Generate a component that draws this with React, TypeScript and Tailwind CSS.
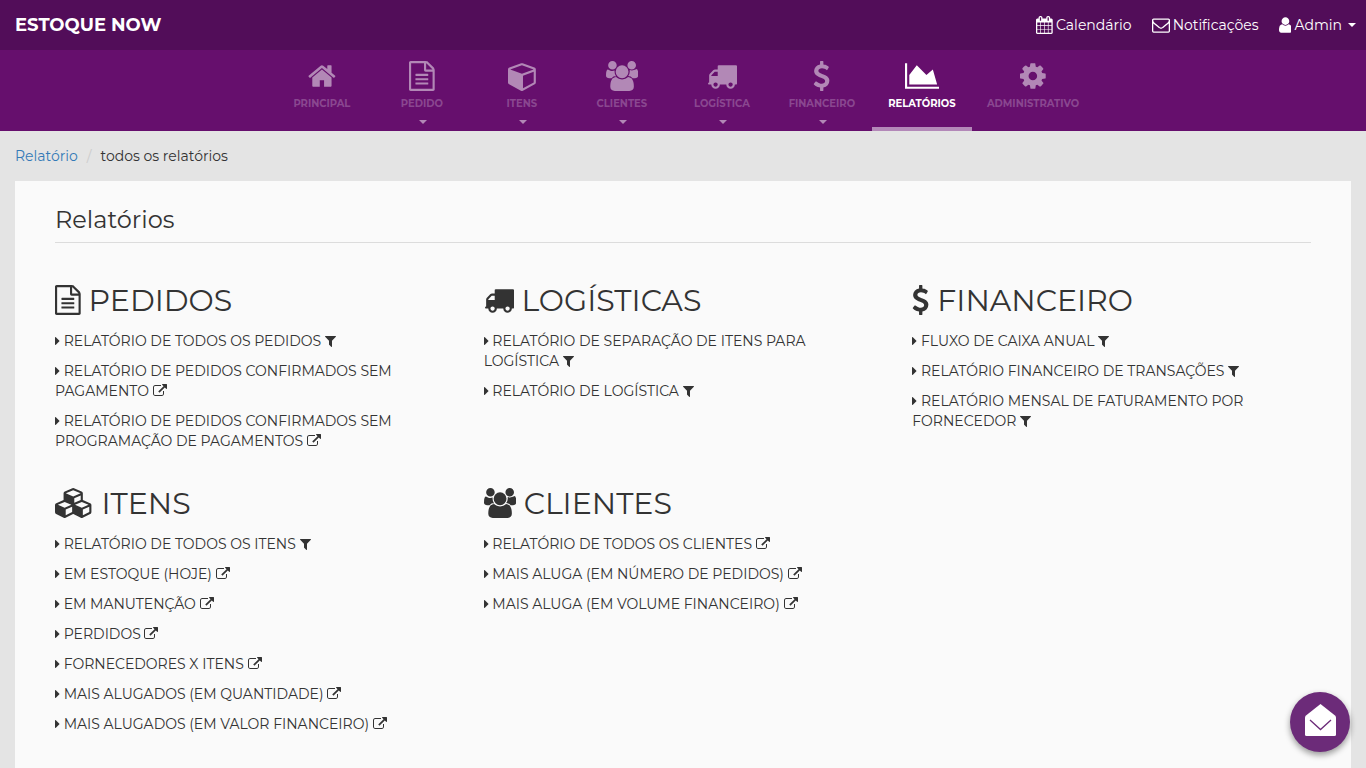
type IconName =
  | "home"
  | "file"
  | "cube"
  | "cubes"
  | "users"
  | "truck"
  | "dollar"
  | "chart"
  | "cog"
  | "calendar"
  | "envelope"
  | "user"
  | "filter"
  | "external"
  | "caret";

const icons: Record<IconName, { box: string; d: string }> = {
  home: {
    box: "64 0 1664 1792",
    d: "M1472 992v480q0 26-19 45t-45 19h-384v-384h-256v384h-384q-26 0-45-19t-19-45v-480q0-1 .5-3t.5-3l575-474 575 474q1 2 1 6zm223-69l-62 74q-8 9-21 11h-3q-13 0-21-7l-692-577-692 577q-12 8-24 7-13-2-21-11l-62-74q-8-10-7-23.5t11-21.5l719-599q32-26 76-26t76 26l244 204v-195q0-14 9-23t23-9h192q14 0 23 9t9 23v408l219 182q10 8 11 21.5t-7 23.5z",
  },
  file: {
    box: "128 0 1536 1792",
    d: "M1596 380q28 28 48 76t20 88v1152q0 40-28 68t-68 28h-1344q-40 0-68-28t-28-68v-1600q0-40 28-68t68-28h896q40 0 88 20t76 48zm-444-244v376h376q-10-29-22-41l-313-313q-12-12-41-22zm384 1528v-1024h-416q-40 0-68-28t-28-68v-416h-768v1536h1280zm-1024-864q0-14 9-23t23-9h704q14 0 23 9t9 23v64q0 14-9 23t-23 9h-704q-14 0-23-9t-9-23v-64zm736 224q14 0 23 9t9 23v64q0 14-9 23t-23 9h-704q-14 0-23-9t-9-23v-64q0-14 9-23t23-9h704zm0 256q14 0 23 9t9 23v64q0 14-9 23t-23 9h-704q-14 0-23-9t-9-23v-64q0-14 9-23t23-9h704z",
  },
  cube: {
    box: "0 0 1664 1792",
    d: "M896 1629l640-349v-636l-640 233v752zm-64-865l698-254-698-254-698 254zm832-252v768q0 35-18 65t-49 47l-704 384q-28 16-61 16t-61-16l-704-384q-31-17-49-47t-18-65v-768q0-40 23-73t61-47l704-256q22-8 44-8t44 8l704 256q38 14 61 47t23 73z",
  },
  cubes: {
    box: "0 0 2304 1792",
    d: "M640 1632l384-192v-314l-384 164v342zm-64-454l404-173-404-173-404 173zm1088 454l384-192v-314l-384 164v342zm-64-454l404-173-404-173-404 173zm-448-293l384-165v-266l-384 164v267zm-64-379l441-189-441-189-441 189zm1088 518v416q0 36-19 67t-52 47l-448 224q-25 14-57 14t-57-14l-448-224q-4-2-7-4-2 2-7 4l-448 224q-25 14-57 14t-57-14l-448-224q-33-16-52-47t-19-67v-416q0-38 21.5-70t56.5-48l434-186v-400q0-38 21.5-70t56.5-48l448-192q23-10 50-10t50 10l448 192q35 16 56.5 48t21.5 70v400l434 186q36 16 57 48t21 70z",
  },
  users: {
    box: "0 0 1920 1792",
    d: "M593 896q-162 5-265 128h-134q-82 0-138-40.5t-56-118.5q0-353 124-353 6 0 43.5 21t97.5 42.5 119 21.5q67 0 133-23-5 37-5 66 0 159 93 287zm1071 637q0 120-73 189.5t-194 69.5h-874q-121 0-194-69.5t-73-189.5q0-53 3.5-103.5t14-109 26.5-108.5 43-97.5 62-81 85.5-53.5 111.5-20q10 0 43 21.5t73 48 107 48 135 21.5 135-21.5 107-48 73-48 43-21.5q61 0 111.5 20t85.5 53.5 62 81 43 97.5 26.5 108.5 14 109 3.5 103.5zm-1024-1277q0 106-75 181t-181 75-181-75-75-181 75-181 181-75 181 75 75 181zm704 384q0 159-112.5 271.5t-271.5 112.5-271.5-112.5-112.5-271.5 112.5-271.5 271.5-112.5 271.5 112.5 112.5 271.5zm576 225q0 78-56 118.5t-138 40.5h-134q-103-123-265-128 93-128 93-287 0-29-5-66 66 23 133 23 59 0 119-21.5t97.5-42.5 43.5-21q124 0 124 353zm-128-609q0 106-75 181t-181 75-181-75-75-181 75-181 181-75 181 75 75 181z",
  },
  truck: {
    box: "0 0 1792 1792",
    d: "M640 1408q0-52-38-90t-90-38-90 38-38 90 38 90 90 38 90-38 38-90zm-384-512h384v-256h-158q-13 0-22 9l-195 195q-9 9-9 22v30zm1280 512q0-52-38-90t-90-38-90 38-38 90 38 90 90 38 90-38 38-90zm256-1088v1024q0 15-4 26.5t-13.5 18.5-16.5 11.5-23.5 6-22.5 2-25.5 0-22.5-.5q0 106-75 181t-181 75-181-75-75-181h-384q0 106-75 181t-181 75-181-75-75-181h-64q-3 0-22.5.5t-25.5 0-22.5-2-23.5-6-16.5-11.5-13.5-18.5-4-26.5q0-26 19-45t45-19v-320q0-8-.5-35t0-38 2.5-34.5 6.5-37 14-30.5 22.5-30l198-198q19-19 50.5-32t58.5-13h160v-192q0-26 19-45t45-19h1024q26 0 45 19t19 45z",
  },
  dollar: {
    box: "384 0 1024 1792",
    d: "M1362 1185q0 153-99.5 263.5t-258.5 136.5v175q0 14-9 23t-23 9h-135q-13 0-22.5-9.5t-9.5-22.5v-175q-66-9-127.5-31t-101.5-44.5-74-48-46.5-37.5-17.5-18q-17-21-2-41l103-135q7-10 23-12 15-2 24 9l2 2q113 99 243 125 37 8 74 8 81 0 142.5-43t61.5-122q0-28-15-53t-33.5-42-58.5-37.5-66-32-80-32.5q-39-16-61.5-25t-61.5-26.5-62.5-31-56.5-35.5-53.5-42.5-43.5-49-35.5-58-21-66.5-8.5-78q0-138 98-242t255-134v-180q0-13 9.5-22.5t22.5-9.5h135q14 0 23 9t9 23v176q57 6 110.5 23t87 33.5 63.5 37.5 39 29 15 14q17 18 5 38l-81 146q-8 15-23 16-14 3-27-7-3-3-14.5-12t-39-26.5-58.5-32-74.5-26-85.5-11.5q-95 0-155 43t-60 111q0 26 8.5 48t29.5 41.5 39.5 33 56 31 60.5 27 70 27.5q53 20 81 31.5t76 35 75.5 42.5 62 50 53 63.5 31.5 76.5 13 94z",
  },
  chart: {
    box: "0 0 2048 1792",
    d: "M2048 1536v128h-2048v-1536h128v1408h1920zm-384-1024l256 896h-1664v-576l448-576 576 576z",
  },
  cog: {
    box: "128 0 1536 1792",
    d: "M1152 896q0-106-75-181t-181-75-181 75-75 181 75 181 181 75 181-75 75-181zm512-109v222q0 12-8 23t-20 13l-185 28q-19 54-39 91 35 50 107 138 10 12 10 25t-9 23q-27 37-99 108t-94 71q-12 0-26-9l-138-108q-44 23-91 38-16 136-29 186-7 28-36 28h-222q-14 0-24.5-8.5t-11.5-21.5l-28-184q-49-16-90-37l-141 107q-10 9-25 9-14 0-25-11-126-114-165-168-7-10-7-23 0-12 8-23 15-21 51-66.5t54-70.5q-27-50-41-99l-183-27q-13-2-21-12.5t-8-23.5v-222q0-12 8-23t19-13l186-28q14-46 39-92-40-57-107-138-10-12-10-24 0-10 9-23 26-36 98.5-107.5t94.5-71.5q13 0 26 10l138 107q44-23 91-38 16-136 29-186 7-28 36-28h222q14 0 24.5 8.5t11.5 21.5l28 184q49 16 90 37l142-107q9-9 24-9 13 0 25 10 129 119 165 170 7 8 7 22 0 12-8 23-15 21-51 66.5t-54 70.5q26 50 41 98l183 28q13 2 21 12.5t8 23.5z",
  },
  calendar: {
    box: "64 0 1664 1792",
    d: "M192 1664h288v-288h-288v288zm352 0h320v-288h-320v288zm-352-352h288v-320h-288v320zm352 0h320v-320h-320v320zm-352-384h288v-288h-288v288zm736 736h320v-288h-320v288zm-384-736h320v-288h-320v288zm768 736h288v-288h-288v288zm-384-352h320v-320h-320v320zm-352-864v-288q0-13-9.5-22.5t-22.5-9.5h-64q-13 0-22.5 9.5t-9.5 22.5v288q0 13 9.5 22.5t22.5 9.5h64q13 0 22.5-9.5t9.5-22.5zm736 864h288v-320h-288v320zm-384-384h320v-288h-320v288zm384 0h288v-288h-288v288zm32-480v-288q0-13-9.5-22.5t-22.5-9.5h-64q-13 0-22.5 9.5t-9.5 22.5v288q0 13 9.5 22.5t22.5 9.5h64q13 0 22.5-9.5t9.5-22.5zm384-64v1280q0 52-38 90t-90 38h-1408q-52 0-90-38t-38-90v-1280q0-52 38-90t90-38h128v-96q0-66 47-113t113-47h64q66 0 113 47t47 113v96h384v-96q0-66 47-113t113-47h64q66 0 113 47t47 113v96h128q52 0 90 38t38 90z",
  },
  envelope: {
    box: "0 0 1792 1792",
    d: "M1664 1504v-768q-32 36-69 66-268 206-426 338-51 43-83 67t-86.5 48.5-102.5 24.5h-2q-48 0-102.5-24.5t-86.5-48.5-83-67q-158-132-426-338-37-30-69-66v768q0 13 9.5 22.5t22.5 9.5h1472q13 0 22.5-9.5t9.5-22.5zm0-1051v-24.5l-.5-13-3-12.5-5.5-9-9-7.5-14-2.5h-1472q-13 0-22.5 9.5t-9.5 22.5q0 168 147 284 193 152 401 317 6 5 35 29.5t46 37.5 44.5 31.5 50.5 27.5 43 9h2q20 0 43-9t50.5-27.5 44.5-31.5 46-37.5 35-29.5q208-165 401-317 54-43 100.5-115.5t46.5-131.5zm128-37v1088q0 66-47 113t-113 47h-1472q-66 0-113-47t-47-113v-1088q0-66 47-113t113-47h1472q66 0 113 47t47 113z",
  },
  user: {
    box: "256 0 1280 1792",
    d: "M1536 1399q0 109-62.5 187t-150.5 78h-854q-88 0-150.5-78t-62.5-187q0-85 8.5-160.5t31.5-152 58.5-131 94-89 134.5-34.5q131 128 313 128t313-128q76 0 134.5 34.5t94 89 58.5 131 31.5 152 8.5 160.5zm-256-887q0 159-112.5 271.5t-271.5 112.5-271.5-112.5-112.5-271.5 112.5-271.5 271.5-112.5 271.5 112.5 112.5 271.5z",
  },
  filter: {
    box: "192 0 1408 1792",
    d: "M1595 295q17 41-14 70l-493 493v742q0 42-39 59-13 5-25 5-27 0-45-19l-256-256q-19-19-19-45v-486l-493-493q-31-29-14-70 17-39 59-39h1280q42 0 59 39z",
  },
  external: {
    box: "0 0 1792 1792",
    d: "M1408 928v320q0 119-84.5 203.5t-203.5 84.5h-832q-119 0-203.5-84.5t-84.5-203.5v-832q0-119 84.5-203.5t203.5-84.5h704q14 0 23 9t9 23v64q0 14-9 23t-23 9h-704q-66 0-113 47t-47 113v832q0 66 47 113t113 47h832q66 0 113-47t47-113v-320q0-14 9-23t23-9h64q14 0 23 9t9 23zm384-864v512q0 26-19 45t-45 19-45-19l-176-176-652 652q-10 10-23 10t-23-10l-114-114q-10-10-10-23t10-23l652-652-176-176q-19-19-19-45t19-45 45-19h512q26 0 45 19t19 45z",
  },
  caret: {
    box: "576 0 640 1792",
    d: "M1152 896q0 26-19 45l-448 448q-19 19-45 19t-45-19-19-45v-896q0-26 19-45t45-19 45 19l448 448q19 19 19 45z",
  },
};

function Icon({ name, className }: { name: IconName; className: string }) {
  return (
    <svg viewBox={icons[name].box} fill="currentColor" aria-hidden="true" className={className}>
      <path d={icons[name].d} />
    </svg>
  );
}

const menu: { label: string; icon: IconName; dropdown?: boolean; active?: boolean }[] = [
  { label: "PRINCIPAL", icon: "home" },
  { label: "PEDIDO", icon: "file", dropdown: true },
  { label: "ITENS", icon: "cube", dropdown: true },
  { label: "CLIENTES", icon: "users", dropdown: true },
  { label: "LOGÍSTICA", icon: "truck", dropdown: true },
  { label: "FINANCEIRO", icon: "dollar", dropdown: true },
  { label: "RELATÓRIOS", icon: "chart", active: true },
  { label: "ADMINISTRATIVO", icon: "cog" },
];

type Report = { title: string; kind: "filter" | "external" };

const groups: { title: string; icon: IconName; reports: Report[] }[] = [
  {
    title: "PEDIDOS",
    icon: "file",
    reports: [
      { title: "RELATÓRIO DE TODOS OS PEDIDOS", kind: "filter" },
      { title: "RELATÓRIO DE PEDIDOS CONFIRMADOS SEM PAGAMENTO", kind: "external" },
      { title: "RELATÓRIO DE PEDIDOS CONFIRMADOS SEM PROGRAMAÇÃO DE PAGAMENTOS", kind: "external" },
    ],
  },
  {
    title: "LOGÍSTICAS",
    icon: "truck",
    reports: [
      { title: "RELATÓRIO DE SEPARAÇÃO DE ITENS PARA LOGÍSTICA", kind: "filter" },
      { title: "RELATÓRIO DE LOGÍSTICA", kind: "filter" },
    ],
  },
  {
    title: "FINANCEIRO",
    icon: "dollar",
    reports: [
      { title: "FLUXO DE CAIXA ANUAL", kind: "filter" },
      { title: "RELATÓRIO FINANCEIRO DE TRANSAÇÕES", kind: "filter" },
      { title: "RELATÓRIO MENSAL DE FATURAMENTO POR FORNECEDOR", kind: "filter" },
    ],
  },
  {
    title: "ITENS",
    icon: "cubes",
    reports: [
      { title: "RELATÓRIO DE TODOS OS ITENS", kind: "filter" },
      { title: "EM ESTOQUE (HOJE)", kind: "external" },
      { title: "EM MANUTENÇÃO", kind: "external" },
      { title: "PERDIDOS", kind: "external" },
      { title: "FORNECEDORES X ITENS", kind: "external" },
      { title: "MAIS ALUGADOS (EM QUANTIDADE)", kind: "external" },
      { title: "MAIS ALUGADOS (EM VALOR FINANCEIRO)", kind: "external" },
    ],
  },
  {
    title: "CLIENTES",
    icon: "users",
    reports: [
      { title: "RELATÓRIO DE TODOS OS CLIENTES", kind: "external" },
      { title: "MAIS ALUGA (EM NÚMERO DE PEDIDOS)", kind: "external" },
      { title: "MAIS ALUGA (EM VOLUME FINANCEIRO)", kind: "external" },
    ],
  },
];

function DownCaret() {
  return <span className="inline-block border-x-4 border-t-4 border-x-transparent border-t-current" />;
}

function TopBar() {
  return (
    <header className="flex h-[50px] items-center justify-between bg-[#520d59] pr-[10px] pl-[15px] text-white">
      <a href="#" className="text-[18px] font-bold">
        ESTOQUE NOW
      </a>
      <div className="flex items-center gap-5 text-[14px]">
        <a href="#" className="flex items-center gap-[3px]">
          <Icon name="calendar" className="h-[18px] w-auto" />
          Calendário
        </a>
        <a href="#" className="flex items-center gap-[3px]">
          <Icon name="envelope" className="h-[18px] w-auto" />
          Notificações
        </a>
        <button type="button" className="flex items-center gap-[3px]">
          <Icon name="user" className="h-[18px] w-auto" />
          Admin
          <span className="ml-[3px] flex">
            <DownCaret />
          </span>
        </button>
      </div>
    </header>
  );
}

function MainMenu() {
  return (
    <nav className="flex justify-center bg-[#660f6d]">
      {menu.map((item) => (
        <a
          key={item.label}
          href="#"
          className={
            item.active
              ? "flex h-[81px] min-w-[100px] flex-col items-center border-b-4 border-[#b388b8] px-[15px] pt-[11px] text-white"
              : "flex h-[81px] min-w-[100px] flex-col items-center px-[15px] pt-[11px] text-[#b288b6]"
          }
        >
          <Icon name={item.icon} className="h-[30px] w-auto" />
          <span
            className={
              item.active
                ? "mt-[3px] text-[10px] leading-[20px] font-bold"
                : "mt-[3px] text-[10px] leading-[20px] font-bold text-[#8a4790]"
            }
          >
            {item.label}
          </span>
          {item.dropdown && (
            <span className="mt-[6px] ml-[2px] flex">
              <DownCaret />
            </span>
          )}
        </a>
      ))}
    </nav>
  );
}

export default function App() {
  return (
    <div className="flex min-h-screen flex-col bg-[#e4e4e4] font-[Montserrat,Inter,sans-serif] text-[14px] leading-[20px] text-[#333]">
      <TopBar />
      <MainMenu />

      {/* Breadcrumb */}
      <nav className="flex h-[50px] items-center gap-[9px] px-[15px]">
        <a href="#" className="text-[#337ab7]">
          Relatório
        </a>
        <span className="text-[#ccc]">/</span>
        <span>todos os relatórios</span>
      </nav>

      <main className="mx-[15px] flex-1 bg-[#fafafa] px-10 pt-[26px] pb-5">
        <h1 className="border-b border-[#dcdcdc] pb-[9px] text-[24px] leading-[26px]">Relatórios</h1>

        <div className="mt-[41px] grid grid-cols-3 gap-x-[30px] gap-y-[36px]">
          {groups.map((group) => (
            <section key={group.title}>
              <h2 className="text-[30px] leading-[33px]">
                <Icon name={group.icon} className="inline-block h-[30px] w-auto align-[-4px]" /> {group.title}
              </h2>
              <ul className="mt-[14px] space-y-[10px] pr-10">
                {group.reports.map((report) => (
                  <li key={report.title}>
                    <a href="#">
                      <Icon name="caret" className="inline-block h-[14px] w-auto align-[-2px]" /> {report.title}{" "}
                      <Icon name={report.kind} className="inline-block h-[14px] w-auto align-[-2px]" />
                    </a>
                  </li>
                ))}
              </ul>
            </section>
          ))}
        </div>
      </main>

      {/* Floating message button */}
      <button
        type="button"
        aria-label="Mensagem"
        className="fixed right-4 bottom-4 flex size-[60px] items-center justify-center rounded-full bg-[#6c2b79] pb-1 shadow-[0_3px_6px_rgba(0,0,0,0.4)]"
      >
        <svg viewBox="0 0 31 32" className="h-8 w-[31px]" aria-hidden="true">
          <path d="M15.5 0L30 11.5Q31 12.3 31 13.5V30.5Q31 32 29.5 32H1.5Q0 32 0 30.5V13.5Q0 12.3 1 11.5Z" fill="#fff" />
          <path d="M5 16L15.5 25.5L26 16" fill="none" stroke="#6c2b79" strokeWidth="1.3" />
        </svg>
      </button>
    </div>
  );
}
